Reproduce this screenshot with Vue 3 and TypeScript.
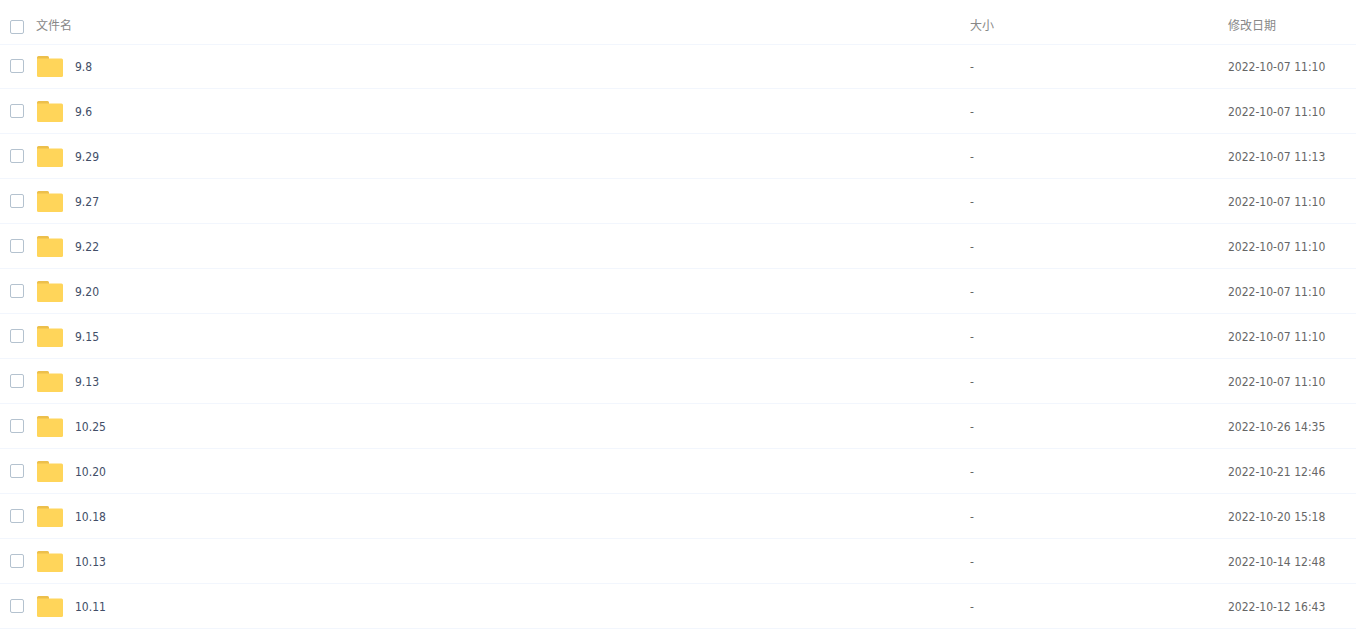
<script setup lang="ts">
import { computed, ref } from 'vue'

interface FileEntry {
  name: string
  size: string
  modified: string
}

const files: FileEntry[] = [
  { name: '9.8', size: '-', modified: '2022-10-07 11:10' },
  { name: '9.6', size: '-', modified: '2022-10-07 11:10' },
  { name: '9.29', size: '-', modified: '2022-10-07 11:13' },
  { name: '9.27', size: '-', modified: '2022-10-07 11:10' },
  { name: '9.22', size: '-', modified: '2022-10-07 11:10' },
  { name: '9.20', size: '-', modified: '2022-10-07 11:10' },
  { name: '9.15', size: '-', modified: '2022-10-07 11:10' },
  { name: '9.13', size: '-', modified: '2022-10-07 11:10' },
  { name: '10.25', size: '-', modified: '2022-10-26 14:35' },
  { name: '10.20', size: '-', modified: '2022-10-21 12:46' },
  { name: '10.18', size: '-', modified: '2022-10-20 15:18' },
  { name: '10.13', size: '-', modified: '2022-10-14 12:48' },
  { name: '10.11', size: '-', modified: '2022-10-12 16:43' },
]

const selected = ref<string[]>([])

const allSelected = computed({
  get: () => selected.value.length === files.length,
  set: (on: boolean) => {
    selected.value = on ? files.map((f) => f.name) : []
  },
})
</script>

<template>
  <table class="files">
    <colgroup>
      <col class="col-check" />
      <col />
      <col class="col-size" />
      <col class="col-date" />
    </colgroup>
    <thead>
      <tr>
        <th class="check head-check"><input v-model="allSelected" type="checkbox" aria-label="全选" /></th>
        <th scope="col">文件名</th>
        <th scope="col">大小</th>
        <th scope="col">修改日期</th>
      </tr>
    </thead>
    <tbody>
      <tr v-for="(file, i) in files" :key="file.name">
        <td class="check">
          <input :id="`file-${i}`" v-model="selected" type="checkbox" :value="file.name" />
        </td>
        <td>
          <label class="name" :for="`file-${i}`">
            <svg class="folder" viewBox="0 0 26 21" aria-hidden="true">
              <path d="M0 6V1.5A1.5 1.5 0 0 1 1.5 0h9A1.5 1.5 0 0 1 12 1.5V6z" fill="#ecbf4b" />
              <path d="M0 2.6h24.5a1.5 1.5 0 0 1 1.5 1.5v15.4a1.5 1.5 0 0 1-1.5 1.5h-23A1.5 1.5 0 0 1 0 19.5z" fill="#ffd55a" />
            </svg>
            <span class="text">{{ file.name }}</span>
          </label>
        </td>
        <td><div class="text">{{ file.size }}</div></td>
        <td><div class="text">{{ file.modified }}</div></td>
      </tr>
    </tbody>
  </table>
</template>

<style>
body {
  margin: 0;
  background: #fff;
}
</style>

<style scoped>
.files {
  width: 100%;
  table-layout: fixed;
  border-collapse: separate;
  border-spacing: 0;
  font: 12px/18px "Noto Sans", "Noto Sans CJK SC", sans-serif;
  color: #666;
}

.col-check {
  width: 36px;
}

.col-size {
  width: 258px;
}

.col-date {
  width: 128px;
}

th,
td {
  box-sizing: border-box;
  padding: 0;
  text-align: left;
  vertical-align: middle;
  white-space: nowrap;
}

th {
  height: 44px;
  padding-top: 8px;
  color: #888;
  font-weight: 400;
}

td {
  height: 45px;
  border-bottom: 1px solid #f2f6fd;
  font-family: "DejaVu Sans Condensed", "DejaVu Sans", sans-serif;
}

tbody tr:first-child td {
  box-shadow: inset 0 1px #f2f6fd;
}

.text {
  padding-top: 2px;
}

.check {
  padding-left: 10px;
}

.head-check {
  padding-top: 10px;
}

.check input {
  display: block;
  box-sizing: border-box;
  width: 14px;
  height: 14px;
  margin: 0;
  appearance: none;
  border: 1px solid #b4c2cf;
  border-radius: 2px;
  background: #fff;
}

.check input:checked {
  background: #06a7ff;
  border-color: #06a7ff;
}

.name {
  display: flex;
  align-items: center;
  gap: 12px;
  padding-left: 1px;
  color: #424e67;
}

.folder {
  display: block;
  width: 26px;
  height: 21px;
}
</style>
